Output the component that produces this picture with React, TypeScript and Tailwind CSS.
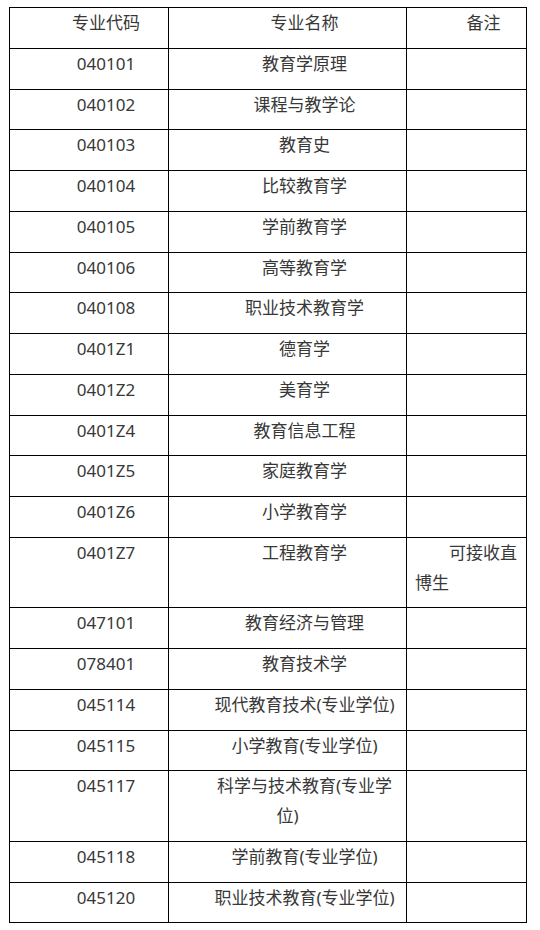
const rows = [
  { code: '040101', name: '教育学原理' },
  { code: '040102', name: '课程与教学论' },
  { code: '040103', name: '教育史' },
  { code: '040104', name: '比较教育学' },
  { code: '040105', name: '学前教育学' },
  { code: '040106', name: '高等教育学' },
  { code: '040108', name: '职业技术教育学' },
  { code: '0401Z1', name: '德育学' },
  { code: '0401Z2', name: '美育学' },
  { code: '0401Z4', name: '教育信息工程' },
  { code: '0401Z5', name: '家庭教育学' },
  { code: '0401Z6', name: '小学教育学' },
  { code: '0401Z7', name: '工程教育学', note: '可接收直博生' },
  { code: '047101', name: '教育经济与管理' },
  { code: '078401', name: '教育技术学' },
  { code: '045114', name: '现代教育技术(专业学位)' },
  { code: '045115', name: '小学教育(专业学位)' },
  { code: '045117', name: '科学与技术教育(专业学位)' },
  { code: '045118', name: '学前教育(专业学位)' },
  { code: '045120', name: '职业技术教育(专业学位)' },
]

const cell = 'border border-black px-2 pt-0 pb-[10px] align-top text-center indent-[34px] font-normal'

export default function App() {
  return (
    <div
      className="min-h-[930px] w-[540px] bg-white pl-[9px] pt-[7px] text-[17px] leading-[29.75px] text-[#383838]"
      style={{ fontFamily: '"Noto Sans", "Noto Sans CJK SC", sans-serif' }}
    >
      <table className="w-[517px] table-fixed border-collapse">
        <colgroup>
          <col className="w-[159px]" />
          <col className="w-[238px]" />
          <col className="w-[120px]" />
        </colgroup>
        <thead>
          <tr>
            <th className={cell}>专业代码</th>
            <th className={cell}>专业名称</th>
            <th className={cell}>备注</th>
          </tr>
        </thead>
        <tbody>
          {rows.map((r) => (
            <tr key={r.code}>
              <td className={cell}>{r.code}</td>
              <td className={cell}>{r.name}</td>
              <td className={r.note ? cell + ' !text-left' : cell}>{r.note}</td>
            </tr>
          ))}
        </tbody>
      </table>
    </div>
  )
}
